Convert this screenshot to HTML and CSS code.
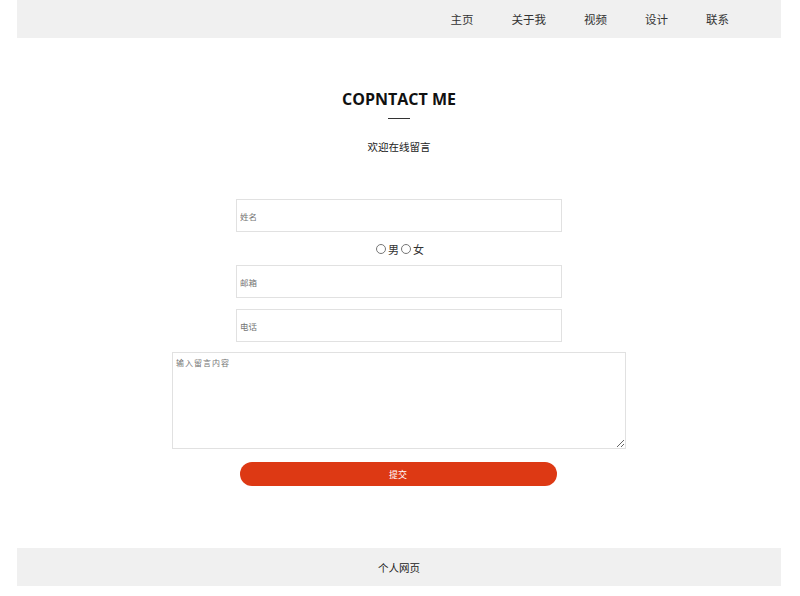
FILE: index.html
```html
<!DOCTYPE html>
<html lang="zh">
<head>
<meta charset="utf-8">
<title>联系</title>
<link rel="stylesheet" href="styles.css">
</head>
<body>
<div class="page">
  <header class="header">
    <nav class="nav">
      <a href="#">主页</a>
      <a href="#">关于我</a>
      <a href="#">视频</a>
      <a href="#">设计</a>
      <a href="#">联系</a>
    </nav>
  </header>
  <main class="main">
    <h1 class="title">COPNTACT ME</h1>
    <div class="rule"></div>
    <p class="subtitle">欢迎在线留言</p>
    <form class="form">
      <input class="field" type="text" placeholder="姓名">
      <div class="gender">
        <label><input type="radio" name="sex">男</label>
        <label><input type="radio" name="sex">女</label>
      </div>
      <input class="field" type="text" placeholder="邮箱">
      <input class="field field-gap" type="text" placeholder="电话">
      <textarea class="message" placeholder="输入留言内容"></textarea>
      <button class="submit" type="button">提交</button>
    </form>
  </main>
  <footer class="footer">个人网页</footer>
</div>
</body>
</html>
```
FILE: styles.css
```css
html, body {
  margin: 0;
  padding: 0;
  background: #fff;
}
body {
  font-family: "Noto Sans CJK SC", "Microsoft YaHei", sans-serif;
  color: #333;
  font-size: 12px;
}
.page {
  width: 764px;
  margin-left: 17px;
}
.header {
  background: #f0f0f0;
  height: 38px;
  display: flex;
  justify-content: flex-end;
  align-items: center;
}
.nav {
  display: flex;
  padding-right: 33px;
}
.nav a {
  color: #333;
  text-decoration: none;
  font-size: 11.5px;
  padding: 0 19px;
  line-height: 38px;
}
.main {
  display: flex;
  flex-direction: column;
  align-items: center;
  padding-top: 50px;
  height: 510px;
  box-sizing: border-box;
}
.title {
  margin: 0;
  font-family: "Open Sans", "Noto Sans CJK SC", sans-serif;
  font-weight: 700;
  font-size: 16px;
  line-height: 22px;
  color: #111;
}
.rule {
  width: 22px;
  height: 1px;
  background: #333;
  margin-top: 8px;
}
.subtitle {
  margin: 20px 0 0;
  font-size: 10.5px;
  line-height: 16px;
  color: #222;
}
.form {
  display: flex;
  flex-direction: column;
  align-items: center;
  margin-top: 44px;
}
.field {
  width: 326px;
  height: 33px;
  box-sizing: border-box;
  border: 1px solid #e1e1e1;
  padding: 0 3px;
  font-family: inherit;
  font-size: 8.5px;
  color: #333;
  outline: none;
  margin: 0;
}
.field::placeholder,
.message::placeholder {
  color: #757575;
}
.gender {
  display: flex;
  align-items: center;
  height: 33px;
  font-size: 11px;
  color: #333;
}
.gender label {
  display: flex;
  align-items: center;
}
.gender input {
  width: 10px;
  height: 10px;
  margin: 0 2px 0 2px;
}
.field-gap {
  margin-top: 11px;
}
.message {
  width: 454px;
  height: 97px;
  box-sizing: border-box;
  border: 1px solid #e1e1e1;
  margin-top: 10px;
  padding: 4px 3px;
  font-family: inherit;
  font-size: 8px;
  letter-spacing: 1px;
  resize: vertical;
  outline: none;
}
.submit {
  width: 317px;
  height: 24px;
  border: none;
  border-radius: 12px;
  background: #dd3914;
  color: #fff;
  font-family: inherit;
  font-size: 9px;
  margin-top: 13px;
  margin-left: -2px;
}
.footer {
  background: #f0f0f0;
  height: 38px;
  display: flex;
  align-items: center;
  justify-content: center;
  font-size: 10.5px;
  color: #222;
}
```
